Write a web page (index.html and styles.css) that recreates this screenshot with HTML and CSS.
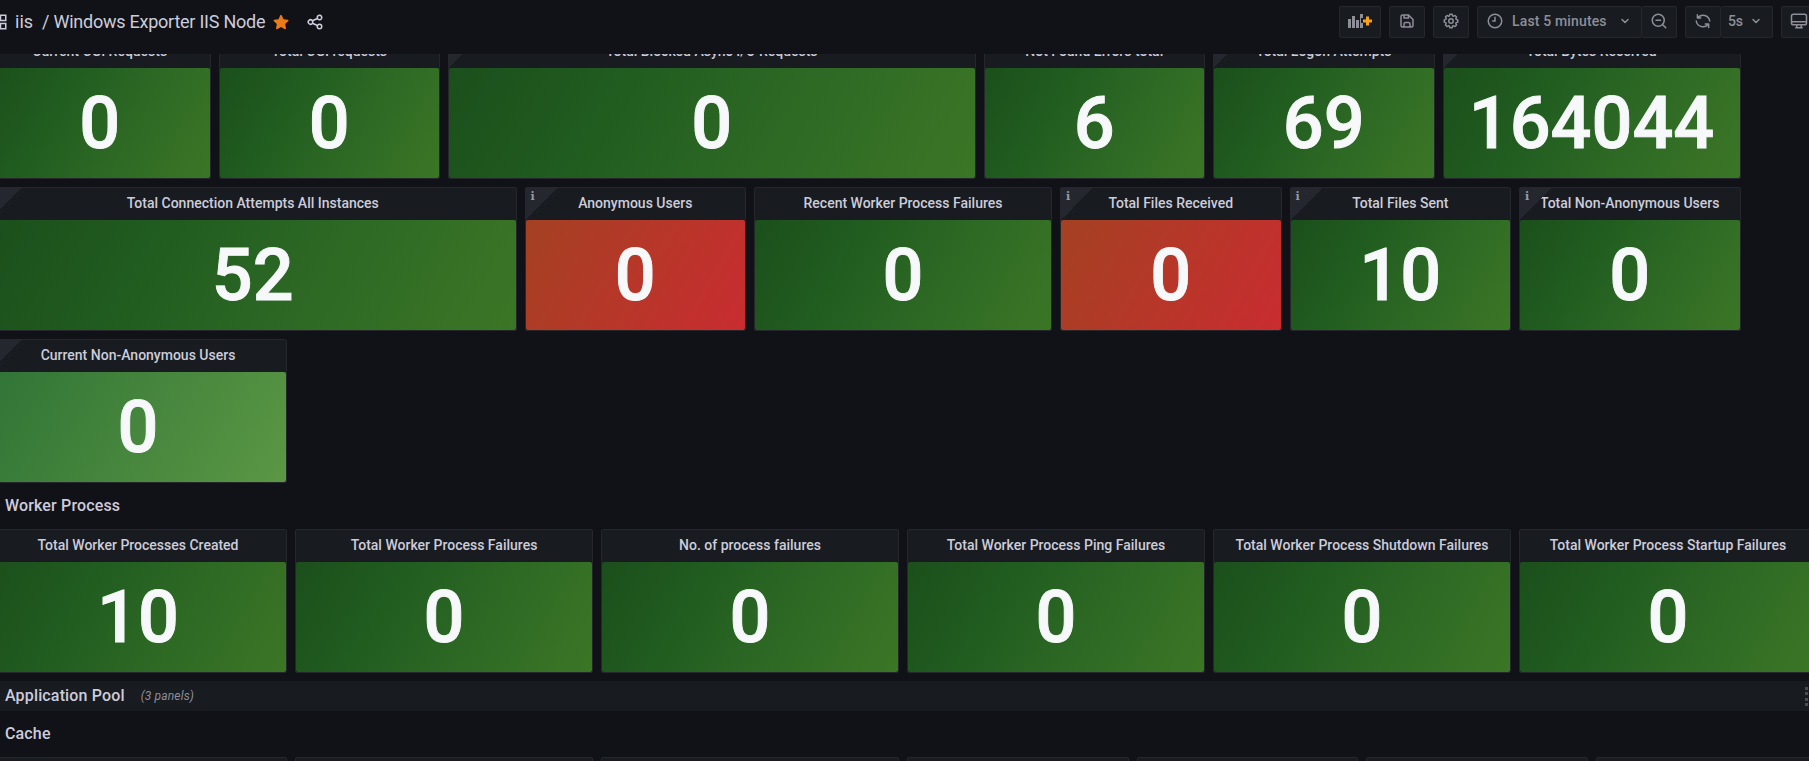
FILE: index.html
```html
<!DOCTYPE html>
<html lang="en">
<head>
<meta charset="utf-8">
<title>Windows Exporter IIS Node</title>
<link rel="stylesheet" href="styles.css">
</head>
<body>
<header class="toolbar">
  <div class="crumbs">
    <svg class="apps" width="18" height="18" viewBox="0 0 24 24" fill="none" stroke="currentColor" stroke-width="2"><path d="M3 3h7v7H3zM14 3h7v7h-7zM3 14h7v7H3zM14 14h7v7h-7z"/></svg>
    <span class="folder">iis</span><span class="name">/ Windows Exporter IIS Node</span>
    <svg class="star" width="18" height="18" viewBox="0 0 24 24" fill="currentColor"><path d="M22 9.700a1 1 0 0 0-.9-.7l-5.700-.8-2.500-5.200a1 1 0 0 0-1.800 0L8.600 8.200 2.900 9a1 1 0 0 0-.6 1.700l4.100 4-1 5.700a1 1 0 0 0 1.500 1.100L12 18.800l5.100 2.700a1 1 0 0 0 1.500-1.100l-1-5.700 4.100-4a1 1 0 0 0 .3-1z"/></svg>
    <svg class="share" width="18" height="18" viewBox="0 0 24 24" fill="currentColor"><path d="M18,14a4,4,0,0,0-3.08,1.48l-5.1-2.35a3.64,3.64,0,0,0,0-2.26l5.1-2.35A4,4,0,1,0,14,6a4.17,4.17,0,0,0,.07.71L8.79,9.14a4,4,0,1,0,0,5.72l5.28,2.43A4.17,4.17,0,0,0,14,18a4,4,0,1,0,4-4ZM18,4a2,2,0,1,1-2,2A2,2,0,0,1,18,4ZM6,14a2,2,0,1,1,2-2A2,2,0,0,1,6,14Zm12,6a2,2,0,1,1,2-2A2,2,0,0,1,18,20Z"/></svg>
  </div>
  <div class="actions">
    <div class="btn add"><svg width="26" height="18" viewBox="0 0 26 18"><path fill="currentColor" d="M1 7h3v9H1zM5 4h3v12H5zM9 8h3v8H9zM13 2h3v4h-2v5h2v5h-3z"/><path fill="#f9a11b" d="M19 4.500h3v3h3v3h-3v3h-3v-3h-3v-3h3z"/></svg></div>
    <div class="btn sq"><svg width="18" height="18" viewBox="0 0 24 24" fill="currentColor"><path d="M20.71,9.29l-6-6a1,1,0,0,0-.32-.21A1.09,1.09,0,0,0,14,3H6A3,3,0,0,0,3,6V18a3,3,0,0,0,3,3H18a3,3,0,0,0,3-3V10A1,1,0,0,0,20.71,9.29ZM9,5h4V7H9Zm6,14H9V16a1,1,0,0,1,1-1h4a1,1,0,0,1,1,1Zm4-1a1,1,0,0,1-1,1H17V16a3,3,0,0,0-3-3H10a3,3,0,0,0-3,3v3H6a1,1,0,0,1-1-1V6A1,1,0,0,1,6,5H7V8A1,1,0,0,0,8,9h6a1,1,0,0,0,1-1V6.410l4,4Z"/></svg></div>
    <div class="btn sq"><svg width="18" height="18" viewBox="0 0 24 24" fill="currentColor"><path d="M21.32,9.55l-1.89-.63.89-1.78A1,1,0,0,0,20.13,6L18,3.87a1,1,0,0,0-1.15-.19l-1.78.89-.63-1.89A1,1,0,0,0,13.5,2h-3a1,1,0,0,0-.95.68L8.92,4.57,7.14,3.68A1,1,0,0,0,6,3.87L3.87,6a1,1,0,0,0-.19,1.15l.89,1.78-1.89.63A1,1,0,0,0,2,10.5v3a1,1,0,0,0,.68.95l1.89.63-.89,1.78A1,1,0,0,0,3.87,18L6,20.13a1,1,0,0,0,1.15.19l1.78-.89.63,1.89a1,1,0,0,0,.95.68h3a1,1,0,0,0,.95-.68l.63-1.89,1.78.89A1,1,0,0,0,18,20.13L20.13,18a1,1,0,0,0,.19-1.15l-.89-1.78,1.89-.63A1,1,0,0,0,22,13.5v-3A1,1,0,0,0,21.32,9.55ZM20,12.78l-1.2.4A2,2,0,0,0,17.64,16l.57,1.14-1.1,1.1L16,17.64a2,2,0,0,0-2.79,1.16l-.4,1.2H11.22l-.4-1.2A2,2,0,0,0,8,17.64l-1.14.57-1.1-1.1L6.36,16A2,2,0,0,0,5.2,13.18L4,12.78V11.22l1.2-.4A2,2,0,0,0,6.36,8L5.79,6.89l1.1-1.1L8,6.36A2,2,0,0,0,10.82,5.2l.4-1.2h1.56l.4,1.2A2,2,0,0,0,16,6.36l1.14-.57,1.1,1.1L17.64,8a2,2,0,0,0,1.16,2.79l1.2.4ZM12,8a4,4,0,1,0,4,4A4,4,0,0,0,12,8Zm0,6a2,2,0,1,1,2-2A2,2,0,0,1,12,14Z"/></svg></div>
    <div class="group">
      <div class="btn time"><svg width="18" height="18" viewBox="0 0 24 24" fill="none" stroke="currentColor" stroke-width="2" stroke-linecap="round"><circle cx="12" cy="12" r="9"/><path d="M12 7v5H9"/></svg><span>Last 5 minutes</span><svg class="chev" width="18" height="18" viewBox="0 0 24 24" fill="none" stroke="currentColor" stroke-width="2" stroke-linecap="round" stroke-linejoin="round"><path d="M8 10l4 4 4-4"/></svg></div>
      <div class="btn sq"><svg width="18" height="18" viewBox="0 0 24 24" fill="none" stroke="currentColor" stroke-width="2" stroke-linecap="round"><circle cx="11" cy="11" r="8"/><path d="M8 11h6M17 17l4 4"/></svg></div>
    </div>
    <div class="group">
      <div class="btn sq"><svg width="18" height="18" viewBox="0 0 24 24" fill="none" stroke="currentColor" stroke-width="2" stroke-linecap="round" stroke-linejoin="round"><path d="M4.500 3.500v4.500h4.500M4.800 8A9 9 0 0 1 21 12M19.500 20.500V16H15M19.200 16A9 9 0 0 1 3 12"/></svg></div>
      <div class="btn rate"><span>5s</span><svg width="18" height="18" viewBox="0 0 24 24" fill="none" stroke="currentColor" stroke-width="2" stroke-linecap="round" stroke-linejoin="round"><path d="M8 10l4 4 4-4"/></svg></div>
    </div>
    <div class="btn sq"><svg width="18" height="18" viewBox="0 0 24 24" fill="none" stroke="currentColor" stroke-width="2" stroke-linejoin="round"><rect x="2" y="3" width="20" height="14" rx="2.500"/><path d="M2 13h20M9 17v4M15 17v4M7 21h10"/></svg></div>
  </div>
</header>
<main class="viewport">
  <div class="grid">
    <section class="panel w3"><h2>Current CGI Requests</h2><div class="stat">0</div></section>
    <section class="panel w3"><h2>Total CGI requests</h2><div class="stat">0</div></section>
    <section class="panel w7 info"><h2>Total Blocked Async I/O Requests</h2><div class="stat">0</div></section>
    <section class="panel w3"><h2>Not Found Errors total</h2><div class="stat">6</div></section>
    <section class="panel w3 info"><h2>Total Logon Attempts</h2><div class="stat">69</div></section>
    <section class="panel w4 info"><h2>Total Bytes Received</h2><div class="stat">164044</div></section>

    <section class="panel w7 info first"><h2>Total Connection Attempts All Instances</h2><div class="stat">52</div></section>
    <section class="panel w3 info"><h2>Anonymous Users</h2><div class="stat red">0</div></section>
    <section class="panel w4"><h2>Recent Worker Process Failures</h2><div class="stat">0</div></section>
    <section class="panel w3 info"><h2>Total Files Received</h2><div class="stat red">0</div></section>
    <section class="panel w3 info"><h2>Total Files Sent</h2><div class="stat">10</div></section>
    <section class="panel w3 info"><h2>Total Non-Anonymous Users</h2><div class="stat">0</div></section>

    <section class="panel w4 info first"><h2>Current Non-Anonymous Users</h2><div class="stat light">0</div></section>

    <div class="row"><svg width="16" height="16" viewBox="0 0 24 24" fill="none" stroke="currentColor" stroke-width="2"><path d="M6 10l5 5 5-5"/></svg><span>Worker Process</span></div>
    <section class="panel w4"><h2>Total Worker Processes Created</h2><div class="stat">10</div></section>
    <section class="panel w4"><h2>Total Worker Process Failures</h2><div class="stat">0</div></section>
    <section class="panel w4"><h2>No. of process failures</h2><div class="stat">0</div></section>
    <section class="panel w4"><h2>Total Worker Process Ping Failures</h2><div class="stat">0</div></section>
    <section class="panel w4"><h2>Total Worker Process Shutdown Failures</h2><div class="stat">0</div></section>
    <section class="panel w4"><h2>Total Worker Process Startup Failures</h2><div class="stat">0</div></section>

    <div class="row collapsed"><svg width="16" height="16" viewBox="0 0 24 24" fill="none" stroke="currentColor" stroke-width="2"><path d="M9 7l5 5-5 5"/></svg><span>Application Pool</span><em>(3 panels)</em><i class="grip"></i></div>
    <div class="row"><svg width="16" height="16" viewBox="0 0 24 24" fill="none" stroke="currentColor" stroke-width="2"><path d="M6 10l5 5 5-5"/></svg><span>Cache</span></div>
    <section class="panel w4"></section>
    <section class="panel w4"></section>
    <section class="panel w4"></section>
    <section class="panel w3"></section>
    <section class="panel w3"></section>
    <section class="panel w3"></section>
    <section class="panel w3"></section>
  </div>
</main>
</body>
</html>
```
FILE: styles.css
```css
* { box-sizing: border-box; }
body {
  margin: 0;
  height: 761px;
  overflow: hidden;
  background: #111217;
  color: #ccccdc;
  font-family: Roboto, "Liberation Sans", sans-serif;
  font-size: 14px;
}
svg { display: block; flex: none; }

.toolbar {
  display: flex;
  justify-content: space-between;
  height: 54px;
  padding-top: 6px;
}
.crumbs { display: flex; align-items: center; height: 31px; font-size: 18px; white-space: nowrap; }
.apps { margin-left: -10px; }
.folder { margin-left: 7px; }
.name { margin-left: 9px; letter-spacing: -.24px; }
.star { margin-left: 7px; color: #eb7b18; }
.share { margin-left: 16px; }

.actions { display: flex; gap: 8px; width: 470px; flex: none; color: #8e8e99; font-weight: 500; }
.group { display: flex; }
.btn {
  display: flex;
  align-items: center;
  justify-content: center;
  flex: none;
  height: 32px;
  padding-bottom: 2px;
  background: #181b1f;
  border: 1px solid #25272c;
  border-radius: 2px;
}
.group .btn + .btn { border-left: 0; }
.add { width: 42px; }
.sq { width: 36px; }
.time { width: 165px; justify-content: flex-start; padding-left: 8px; }
.time span { margin-left: 8px; letter-spacing: .15px; }
.chev { margin-left: 9px; }
.group .sq:last-child { width: 35px; }
.rate { width: 52px; gap: 4px; }

.viewport { height: 707px; overflow: hidden; }
.grid {
  display: grid;
  grid-template-columns: repeat(24, 68.5px);
  grid-auto-rows: 30px;
  gap: 8px;
  width: 1828px;
  margin: -19px 0 0 -11px;
}
.panel {
  position: relative;
  grid-row: span 4;
  display: flex;
  flex-direction: column;
  background: #181b1f;
  border: 1px solid #25272c;
  border-radius: 2px;
}
.w3 { grid-column: auto / span 3; }
.w4 { grid-column: auto / span 4; }
.w7 { grid-column: auto / span 7; }
.w4.first { grid-column: 1 / span 4; }
.w7.first { grid-column: 1 / span 7; }
.panel h2 {
  margin: 0;
  height: 32px;
  line-height: 30px;
  text-align: center;
  font-size: 14px;
  font-weight: 500;
  white-space: nowrap;
}
.info::before {
  content: "";
  position: absolute;
  left: 0;
  top: 0;
  width: 32px;
  height: 32px;
  background: linear-gradient(135deg, #24282e 50%, transparent 50%);
}
.info::after {
  content: "i";
  position: absolute;
  left: 5px;
  top: 3px;
  color: #9a9aa8;
  font: bold 11px/12px "DejaVu Serif", serif;
}
.stat {
  flex: 1;
  display: flex;
  align-items: center;
  justify-content: center;
  padding-top: 2px;
  border-radius: 2px;
  background: linear-gradient(120deg, #1b4f1c, #225e20 35%, #2f6a25 65%, #3b7626);
  color: #f7f8fa;
  font-size: 72px;
  font-weight: 500;
  line-height: 86px;
  -webkit-text-stroke: .9px #f7f8fa;
}
.red { background: linear-gradient(120deg, #a44122, #c92c30); }
.light { background: linear-gradient(120deg, #307436, #5b9744); }

.row {
  grid-column: 1 / -1;
  display: flex;
  align-items: center;
  padding-bottom: 2px;
  font-size: 16px;
  font-weight: 500;
  letter-spacing: .15px;
}
.row em { margin: 2px 0 0 16px; font-size: 12px; font-weight: 400; color: #8e8e99; }
.collapsed { background: #181b1f; }
.grip {
  width: 3px;
  height: 19px;
  margin: 2px 9px 0 auto;
  background: repeating-linear-gradient(#4a4c52 0 3px, transparent 3px 5.33px);
}
```
